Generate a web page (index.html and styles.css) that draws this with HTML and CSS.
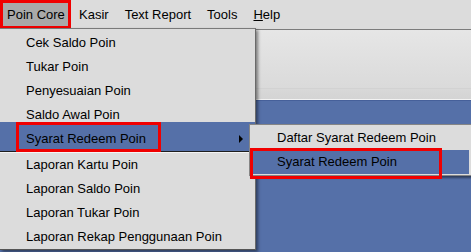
FILE: index.html
```html
<!DOCTYPE html>
<html lang="en">
<head>
  <meta charset="UTF-8">
  <meta name="viewport" content="width=device-width, initial-scale=1.0">
  <title>Poin Core</title>
  <link rel="stylesheet" href="styles.css">
</head>
<body>
  <div class="app">
    <div class="menubar">
      <span class="menu-title open">Poin Core</span>
      <span class="menu-title">Kasir</span>
      <span class="menu-title">Text Report</span>
      <span class="menu-title">Tools</span>
      <span class="menu-title"><u>H</u>elp</span>
    </div>
    <div class="toolbar"></div>
    <div class="desktop"></div>

    <!-- dropdown of Poin Core -->
    <div class="dropdown">
      <div class="item">Cek Saldo Poin</div>
      <div class="item">Tukar Poin</div>
      <div class="item">Penyesuaian Poin</div>
      <div class="item">Saldo Awal Poin</div>
      <div class="item active">
        Syarat Redeem Poin
        <span class="arrow"></span>
        <span class="mark mark-main"></span>
      </div>
      <div class="item">Laporan Kartu Poin</div>
      <div class="item">Laporan Saldo Poin</div>
      <div class="item">Laporan Tukar Poin</div>
      <div class="item">Laporan Rekap Penggunaan Poin</div>
    </div>

    <!-- submenu of Syarat Redeem Poin -->
    <div class="submenu">
      <div class="sub-item">Daftar Syarat Redeem Poin</div>
      <div class="sub-item active">
        Syarat Redeem Poin
        <span class="mark mark-sub"></span>
      </div>
    </div>
  </div>
</body>
</html>
```

FILE: styles.css
```css
body {
  margin: 0;
  font-family: "Liberation Sans", Arial, sans-serif;
  font-size: 13px;
  color: #000;
}

.app {
  position: relative;
  width: 471px;
  height: 252px;
  overflow: hidden;
  background: #dcdcdc;
  display: flex;
  flex-direction: column;
}

/* menu bar */
.menubar {
  display: flex;
  height: 29px;
  background: #dcdcdc;
}
.menu-title {
  padding: 0 8px;
  line-height: 29px;
}
.menu-title.open {
  box-sizing: border-box;
  width: 71px;
  padding: 0 0 0 4px;
  line-height: 23px;
  background: #a9a9a9;
  border: 3px solid #f00000;
}

/* toolbar strip under the menu */
.toolbar {
  height: 69px;
  border-top: 1px solid #7c7c7c;
  border-bottom: 1px solid #f2f2f2;
  background: linear-gradient(#e6e6e6 0, #dadada 58px, #d2d2d2 58px, #d2d2d2 59px, #d8d8d8 59px, #d4d4d4 100%);
}

.desktop {
  flex: 1;
  background: #5570a8;
  border-top: 1px solid #46609a;
}

/* dropdown menu */
.dropdown {
  position: absolute;
  left: 0;
  top: 28px;
  width: 255px;
  padding-top: 2px;
  background: #dcdcdc;
  border-top: 1px solid #7a7a7a;
  border-right: 1px solid #6a6a6a;
  border-bottom: 1px solid #555;
  box-shadow: 2px 2px 3px rgba(0, 0, 0, 0.45);
}
.item {
  position: relative;
  height: 24px;
  line-height: 24px;
  padding-left: 26px;
}
.item.active {
  margin-top: -5px;
  padding-top: 5px;
  background: #5570a8;
  border-bottom: 1px solid #1e1e1e;
  box-shadow: 0 1px 0 #f4f4f4;
  margin-bottom: 1px;
}
.arrow {
  position: absolute;
  right: 12px;
  top: 13px;
  width: 0;
  height: 0;
  border-top: 4px solid transparent;
  border-bottom: 4px solid transparent;
  border-left: 4px solid #000;
}

/* red marks */
.mark {
  position: absolute;
  box-sizing: border-box;
  border: 3px solid #f00000;
}
.mark-main {
  left: 16px;
  top: 0;
  width: 145px;
  height: 30px;
}
.mark-sub {
  left: -2px;
  top: -2px;
  width: 192px;
  height: 31px;
}

/* submenu */
.submenu {
  position: absolute;
  left: 249px;
  top: 124px;
  width: 219px;
  padding: 1px 1px 1px;
  background: #dcdcdc;
  border: 1px solid #858585;
  box-shadow: 2px 2px 2px rgba(0, 0, 0, 0.45);
}
.sub-item {
  position: relative;
  height: 24px;
  line-height: 24px;
  padding-left: 26px;
}
.sub-item.active {
  margin: 0 1px;
  padding-left: 25px;
  height: 22px;
  padding-bottom: 2px;
  background: #5570a8;
}
```
